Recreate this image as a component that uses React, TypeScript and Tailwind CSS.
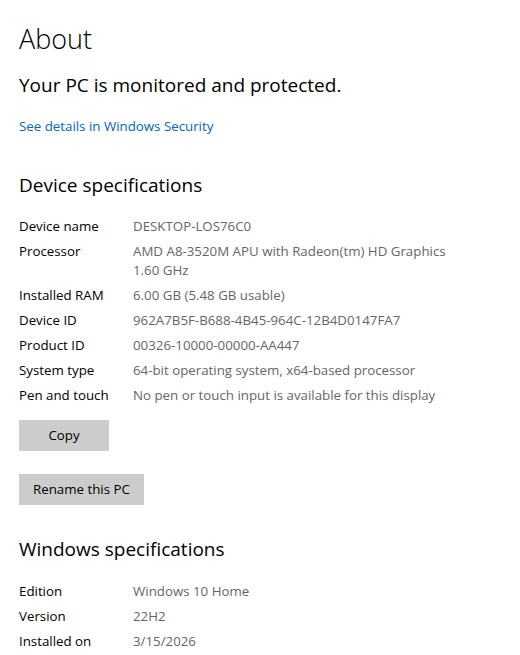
import React from "react";

const font = { fontFamily: '"Segoe UI", "Open Sans", "Noto Sans", sans-serif' };

function Row({ label, value }: { label: string; value: React.ReactNode }) {
  return (
    <div className="flex text-[13.3px] leading-[19px]">
      <div className="w-[114px] shrink-0 text-black">{label}</div>
      <div className="w-[322px] text-[#666666]">{value}</div>
    </div>
  );
}

export default function App() {
  return (
    <div className="w-[520px] h-[655px] bg-white overflow-hidden pl-[19px]" style={font}>
      <h1 className="pt-[20px] text-[27px] leading-[38px] font-light text-black">About</h1>
      <div className="mt-[14px] text-[19px] leading-[26px] text-black">Your PC is monitored and protected.</div>
      <div className="mt-[19px] text-[13.3px] leading-[19px] text-[#0067c0]">See details in Windows Security</div>
      <h2 className="mt-[36px] text-[19px] leading-[26px] text-black">Device specifications</h2>
      <div className="mt-[19px] flex flex-col gap-[6px]">
        <Row label="Device name" value="DESKTOP-LOS76C0" />
        <Row label="Processor" value="AMD A8-3520M APU with Radeon(tm) HD Graphics 1.60 GHz" />
        <Row label="Installed RAM" value="6.00 GB (5.48 GB usable)" />
        <Row label="Device ID" value="962A7B5F-B688-4B45-964C-12B4D0147FA7" />
        <Row label="Product ID" value="00326-10000-00000-AA447" />
        <Row label="System type" value="64-bit operating system, x64-based processor" />
        <Row label="Pen and touch" value="No pen or touch input is available for this display" />
      </div>
      <button className="mt-[15px] block w-[90px] h-[31px] bg-[#cccccc] text-[13.3px] text-black">Copy</button>
      <button className="mt-[23px] block px-[14px] h-[31px] bg-[#cccccc] text-[13.3px] text-black">Rename this PC</button>
      <h2 className="mt-[31px] text-[19px] leading-[26px] text-black">Windows specifications</h2>
      <div className="mt-[20px] flex flex-col gap-[6px]">
        <Row label="Edition" value="Windows 10 Home" />
        <Row label="Version" value="22H2" />
        <Row label="Installed on" value="3/15/2026" />
      </div>
    </div>
  );
}
